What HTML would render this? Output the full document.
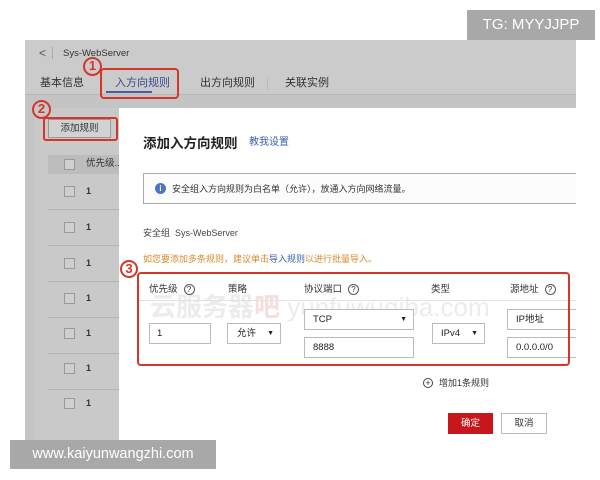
<!DOCTYPE html>
<html><head><meta charset="utf-8"><style>
*{margin:0;padding:0;box-sizing:border-box}
body{width:600px;height:480px;background:#fff;position:relative;overflow:hidden;font-family:"Liberation Sans","Noto Sans CJK SC",sans-serif;color:#333}
.a{position:absolute}
.t{position:absolute;white-space:nowrap;font-size:10px;line-height:12px}
.circ{position:absolute;border:2px solid #d4362c;border-radius:50%;color:#d4362c;font-weight:bold;font-size:13px;line-height:14px;text-align:center;background:transparent}
.box{position:absolute;border:1px solid #bbb;background:#fff;font-size:9.5px;line-height:19px;padding-left:7px;color:#222}
.q{display:inline-block;width:11px;height:11px;border:1px solid #555;border-radius:50%;font-size:8px;line-height:9px;text-align:center;margin-left:6px;vertical-align:middle}
.cb{position:absolute;width:11px;height:11px;border:1px solid #999;background:#cfcfcf}
</style></head><body>
<div class="a" style="left:25px;top:40px;width:551px;height:400px;background:#c4c4c4"></div>
<div class="a" style="left:25px;top:40px;width:551px;height:55px;background:#cbcbcb;border-bottom:1px solid #b8b8b8"></div>
<div class="t" style="left:39px;top:47px;font-size:12px;color:#555">&lt;</div>
<div class="a" style="left:52px;top:47px;width:1px;height:12px;background:#aaa"></div>
<div class="t" style="left:63px;top:48px;font-size:9.5px;color:#333">Sys-WebServer</div>
<div class="t" style="left:40px;top:76px;font-size:11px;line-height:14px;color:#333">基本信息</div>
<div class="t" style="left:115px;top:76px;font-size:11px;line-height:14px;color:#3a4a90">入方向规则</div>
<div class="a" style="left:106px;top:91px;width:46px;height:2px;background:#4b5aa6"></div>
<div class="t" style="left:200px;top:76px;font-size:11px;line-height:14px;color:#333">出方向规则</div>
<div class="a" style="left:267px;top:78px;width:1px;height:12px;background:#bbb"></div>
<div class="t" style="left:285px;top:76px;font-size:11px;line-height:14px;color:#333">关联实例</div>
<div class="a" style="left:100px;top:68px;width:79px;height:31px;border:2px solid #d4362c;border-radius:4px"></div>
<div class="circ" style="left:83px;top:57px;width:19px;height:19px">1</div>

<div class="a" style="left:35px;top:108px;width:85px;height:332px;background:#c9c9c9"></div>
<div class="a" style="left:48px;top:119px;width:63px;height:19px;background:#d2d2d2;border:1px solid #999;font-size:9.5px;line-height:17px;text-align:center">添加规则</div>
<div class="a" style="left:43px;top:117px;width:75px;height:24px;border:2px solid #d4362c;border-radius:3px"></div>
<div class="circ" style="left:32px;top:100px;width:19px;height:19px">2</div>
<div class="a" style="left:48px;top:155px;width:72px;height:19px;background:#bcbcbc"></div>
<div class="cb" style="left:64px;top:159px"></div>
<div class="t" style="left:86px;top:158px;font-size:9.5px">优先级...</div>
<div class="a" style="left:48px;top:174px;width:72px;height:250px;background:repeating-linear-gradient(#c9c9c9 0,#c9c9c9 35px,#b4b4b4 35px,#b4b4b4 36px)"></div>
<div class="cb" style="left:64px;top:186px"></div><div class="t" style="left:86px;top:185px;font-weight:bold;font-size:9px">1</div>
<div class="cb" style="left:64px;top:222px"></div><div class="t" style="left:86px;top:221px;font-weight:bold;font-size:9px">1</div>
<div class="cb" style="left:64px;top:258px"></div><div class="t" style="left:86px;top:257px;font-weight:bold;font-size:9px">1</div>
<div class="cb" style="left:64px;top:293px"></div><div class="t" style="left:86px;top:292px;font-weight:bold;font-size:9px">1</div>
<div class="cb" style="left:64px;top:328px"></div><div class="t" style="left:86px;top:327px;font-weight:bold;font-size:9px">1</div>
<div class="cb" style="left:64px;top:363px"></div><div class="t" style="left:86px;top:362px;font-weight:bold;font-size:9px">1</div>
<div class="cb" style="left:64px;top:398px"></div><div class="t" style="left:86px;top:397px;font-weight:bold;font-size:9px">1</div>

<div class="a" style="left:119px;top:108px;width:457px;height:332px;background:#fff"></div>
<div class="t" style="left:143px;top:135px;font-size:13.5px;line-height:17px;font-weight:bold;color:#222">添加入方向规则</div>
<div class="t" style="left:249px;top:137px;font-size:10px;color:#3b5cb0">教我设置</div>
<div class="a" style="left:143px;top:173px;width:433px;height:31px;border:1px solid #aaa;border-right:none;background:#fcfcfc"></div>
<div class="a" style="left:155px;top:183px;width:11px;height:11px;border-radius:50%;background:#4a74c9;color:#fff;font-size:8px;line-height:11px;text-align:center;font-weight:bold">i</div>
<div class="t" style="left:172px;top:183px;font-size:9px">安全组入方向规则为白名单（允许），放通入方向网络流量。</div>
<div class="t" style="left:143px;top:227px;font-size:9px;color:#444">安全组&nbsp; Sys-WebServer</div>
<div class="t" style="left:143px;top:253px;font-size:9px;color:#d98a2c">如您要添加多条规则，建议单击<span style="color:#3b5cb0">导入规则</span>以进行批量导入。</div>

<div class="t" style="left:150px;top:292px;font-size:26px;line-height:30px;font-weight:bold;color:rgba(200,200,200,0.35)">云服务器<span style="color:rgba(235,170,170,0.4)">吧</span> <span style="font-weight:normal">yunfuwuqiba.com</span></div>
<div class="a" style="left:138px;top:300px;width:438px;height:1px;background:#e2e2e2"></div>
<div class="t" style="left:149px;top:284px;font-size:9.5px">优先级<span class="q">?</span></div>
<div class="t" style="left:228px;top:284px;font-size:9.5px">策略</div>
<div class="t" style="left:304px;top:284px;font-size:9.5px">协议端口<span class="q">?</span></div>
<div class="t" style="left:431px;top:284px;font-size:9.5px">类型</div>
<div class="t" style="left:510px;top:284px;font-size:9.5px">源地址<span class="q">?</span></div>
<div class="box" style="left:149px;top:323px;width:62px;height:21px">1</div>
<div class="box" style="left:227px;top:323px;width:54px;height:21px;padding-left:9px">允许<span style="position:absolute;right:6px;font-size:7px">▼</span></div>
<div class="box" style="left:304px;top:309px;width:110px;height:21px;padding-left:8px">TCP<span style="position:absolute;right:6px;font-size:7px">▼</span></div>
<div class="box" style="left:304px;top:337px;width:110px;height:21px;padding-left:8px">8888</div>
<div class="box" style="left:432px;top:323px;width:53px;height:21px;padding-left:8px">IPv4<span style="position:absolute;right:6px;font-size:7px">▼</span></div>
<div class="box" style="left:507px;top:309px;width:69px;height:21px;padding-left:8px;border-right:none">IP地址</div>
<div class="box" style="left:507px;top:337px;width:69px;height:21px;padding-left:8px;border-right:none">0.0.0.0/0</div>
<div class="a" style="left:137px;top:272px;width:433px;height:94px;border:2px solid #d4362c;border-radius:4px"></div>
<div class="circ" style="left:120px;top:260px;width:18px;height:18px;background:#fff">3</div>

<div class="a" style="left:423px;top:378px;width:10px;height:10px;border:1px solid #444;border-radius:50%;font-size:9px;line-height:8px;text-align:center">+</div>
<div class="t" style="left:439px;top:377px;font-size:9px">增加1条规则</div>
<div class="a" style="left:448px;top:413px;width:45px;height:21px;background:#c8161d;color:#fff;font-size:9.5px;line-height:21px;text-align:center">确定</div>
<div class="a" style="left:501px;top:413px;width:46px;height:21px;border:1px solid #bbb;font-size:9.5px;line-height:19px;text-align:center">取消</div>

<div class="a" style="left:467px;top:10px;width:128px;height:30px;background:#a8a8a8;color:#fff;font-size:15px;line-height:30px;text-align:center">TG: MYYJJPP</div>
<div class="a" style="left:10px;top:440px;width:206px;height:29px;background:#a8a8a8;color:#fff;font-size:14.5px;line-height:29px;text-align:center">www.kaiyunwangzhi.com</div>
</body></html>
